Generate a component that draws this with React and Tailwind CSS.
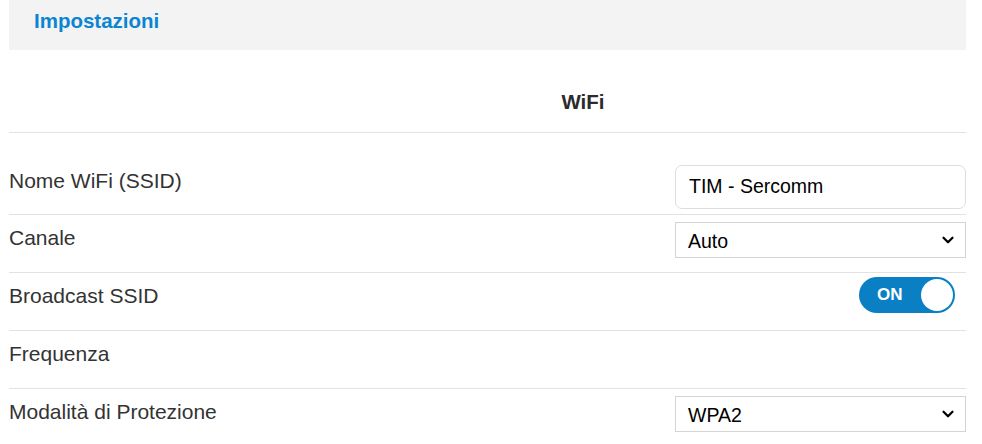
import { ChevronDown } from 'lucide-react';

const font = { fontFamily: '"Liberation Sans", Arial, sans-serif' };

function Row({ label, children, first }) {
  return (
    <div className={`flex items-start justify-between border-b border-[#e2e2e2] ${first ? 'h-[82px] pt-8' : 'h-[58px] pt-[7px]'}`}>
      <span className="-mt-[2px] text-[21px] leading-[35px] text-[#333]">{label}</span>
      <div className="flex w-[291px] justify-end">{children}</div>
    </div>
  );
}

function Select({ value }) {
  return (
    <div className="flex h-[36px] w-[291px] items-center justify-between border border-[#d4d4d4] bg-white pl-[12px] pr-[8px] pt-[4px] text-[19.5px] text-black">
      <span>{value}</span>
      <ChevronDown size={18} strokeWidth={3} className="-mt-[4px] text-black" />
    </div>
  );
}

export default function App() {
  return (
    <div className="h-[444px] w-[982px] overflow-hidden bg-white" style={font}>
      <div className="mx-[9px] w-[957px]">
        <div className="flex h-[50px] items-center bg-[#f3f3f3] pb-[8px] pl-[25px]">
          <h1 className="text-[20.5px] font-bold text-[#0a85d1]">Impostazioni</h1>
        </div>
        <div className="flex h-[83px] items-center justify-center border-b border-[#e2e2e2] pt-[22px]">
          <h2 className="pl-[191px] text-[20.5px] font-bold text-[#2b2b2b]">WiFi</h2>
        </div>
        <Row label="Nome WiFi (SSID)" first>
          <div className="flex h-[44px] w-[291px] items-center rounded-[7px] border border-[#dedede] bg-white px-[13px] text-[19.5px] text-black">
            TIM - Sercomm
          </div>
        </Row>
        <Row label="Canale">
          <Select value="Auto" />
        </Row>
        <Row label="Broadcast SSID">
          <div className="mr-[11px] -mt-[3px] flex h-[36px] w-[96px] items-center justify-between rounded-full bg-[#0a7fc4] pl-[18px] pr-[2px]">
            <span className="text-[17px] font-bold text-white">ON</span>
            <span className="h-[32px] w-[32px] rounded-full bg-white" />
          </div>
        </Row>
        <Row label="Frequenza" />
        <Row label="Modalità di Protezione">
          <Select value="WPA2" />
        </Row>
      </div>
    </div>
  );
}
